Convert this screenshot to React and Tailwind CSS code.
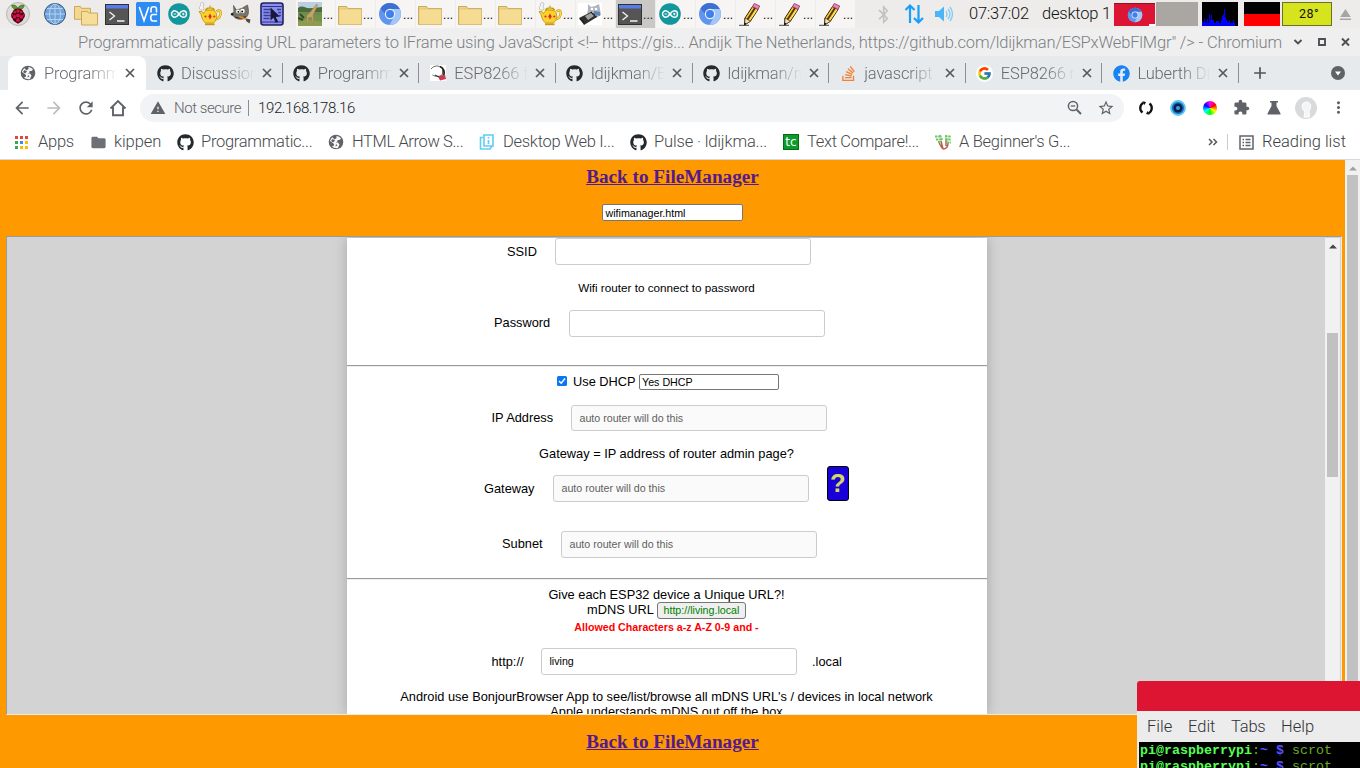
import React from "react";
import { FaGithub, FaFacebook, FaBluetoothB } from "react-icons/fa";
import { SiStackoverflow } from "react-icons/si";
import { FcGoogle } from "react-icons/fc";
import {
  MdArrowBack, MdArrowForward, MdRefresh, MdWarning, MdStarBorder,
  MdExtension, MdMoreVert, MdEject, MdFolder, MdAdd,
} from "react-icons/md";

function Raspberry() {
  return (
    <svg width="24" height="24" viewBox="0 0 24 24">
      <circle cx="12" cy="12" r="11.5" fill="#dcdbd9" stroke="#b9b8b6" />
      <path d="M11.5 7.5C8 7.5 6 6 5.7 3.2 9 2.6 11 4 11.8 6.5 12.6 4 15 2.6 18.2 3.2 18 6 16 7.500 12.500 7.500z" fill="#5f9e2a" stroke="#2d5a14" strokeWidth=".6" />
      <path d="M12 6.500C15 6.500 17 8 17.600 10.500 19.500 12 19.300 15 17.600 16.500 16.800 19.500 14 20.500 12 21.700 10 20.500 7.200 19.500 6.400 16.500 4.700 15 4.500 12 6.400 10.500 7 8 9 6.500 12 6.500z" fill="#4a0016" />
      <g fill="#c8143f">
        <circle cx="12" cy="9" r="1.800" /><circle cx="8.800" cy="10" r="1.500" /><circle cx="15.200" cy="10" r="1.500" />
        <circle cx="12" cy="13.500" r="2" /><circle cx="8.500" cy="14.800" r="1.900" /><circle cx="15.500" cy="14.800" r="1.900" />
        <circle cx="12" cy="18.200" r="1.900" /><circle cx="6.200" cy="13" r=".9" /><circle cx="17.800" cy="13" r=".9" />
      </g>
    </svg>
  );
}

function Globe() {
  return (
    <svg width="24" height="24" viewBox="0 0 24 24">
      <circle cx="12" cy="12" r="10.500" fill="#6ea3dc" stroke="#33527d" />
      <g fill="none" stroke="#b7d0ee" strokeWidth="1"><path d="M12 2v20M2 12h20M4 6.500h16M4 17.500h16" /><ellipse cx="12" cy="12" rx="5.500" ry="10" /></g>
    </svg>
  );
}

function Folder() {
  return (
    <svg width="24" height="24" viewBox="0 0 24 24">
      <path d="M.5 4.500h8l1.500 2h13.500v16H.5z" fill="#efd385" stroke="#c9a95f" />
      <path d="M1 7h22.500v15.500H1z" fill="#f6dc92" stroke="#d9bb72" strokeWidth=".7" />
    </svg>
  );
}

function Folders() {
  return (
    <svg width="26" height="24" viewBox="0 0 26 24">
      <path d="M1.500 4.500h6l1 1.800h9v11h-16z" fill="#f3d88e" stroke="#caa95e" />
      <path d="M8.500 9.500h6l1 1.500h9v12h-16z" fill="#f7de98" stroke="#caa95e" />
    </svg>
  );
}

function Terminal() {
  return (
    <svg width="24" height="24" viewBox="0 0 24 24">
      <rect x=".5" y="2.500" width="23" height="20" fill="#555" stroke="#303030" />
      <path d="M1 3h22v3.500H1z" fill="#587be6" />
      <path d="M4.500 10l5 4-5 4M12 19h7.500" fill="none" stroke="#f4f4f4" strokeWidth="1.300" />
    </svg>
  );
}

function Vnc() {
  return (
    <svg width="24" height="24" viewBox="0 0 24 24">
      <rect width="24" height="24" rx="1.500" fill="#2d8cf2" />
      <g fill="none" stroke="#fff" strokeWidth="1.600" strokeLinecap="round"><path d="M3.500 5.500l4.500 13 4.500-13" /><path d="M15 10V7c0-3 5.500-3 5.500 0v3" /><path d="M20.500 12.500H17c-3 0-3 6.500 0 6.500h3.500" /></g>
    </svg>
  );
}

function Arduino() {
  return (
    <svg width="24" height="24" viewBox="0 0 24 24">
      <circle cx="12" cy="12" r="10.800" fill="#12979c" />
      <path d="M12 12c-1.500-2.200-2.400-3.300-4.200-3.300a3.300 3.300 0 1 0 0 6.600c1.800 0 2.700-1.100 4.200-3.300s2.400-3.300 4.200-3.300a3.300 3.300 0 1 1 0 6.600c-1.800 0-2.700-1.100-4.200-3.300z" fill="none" stroke="#fff" strokeWidth="1.500" />
      <path d="M6.500 12h2.600M15 12h2.600M16.300 10.700v2.600" stroke="#fff" strokeWidth=".9" />
    </svg>
  );
}

function Teapot() {
  return (
    <svg width="24" height="24" viewBox="0 0 24 24">
      <path d="M2.500 8c-3-3 1-3.500 0-6.500 2-2 4.500-.5 3 1.500s1.500 3 0 5z" fill="#f6f6f6" stroke="#b4b4b4" strokeWidth=".8" />
      <path d="M18.500 9.500c5.500-4 6 5-.5 8" fill="none" stroke="#d29a08" strokeWidth="2.400" />
      <path d="M18.500 9.500c5.500-4 6 5-.5 8" fill="none" stroke="#ffe14a" strokeWidth="1.100" />
      <path d="M1 9.500h3l1.500 2c1-2.500 3-4 6-4s6 1 7 4.500c1 4-1 7-3 9H7.500C5 19 3.500 15.500 3 12.500z" fill="#f9d22c" stroke="#c08d0c" strokeWidth=".8" />
      <path d="M7.500 8c1-2.800 8-2.800 9 0zM12 3.500V6" fill="#fbe25a" stroke="#c99812" strokeWidth="1.100" />
      <path d="M12 11.500l1.800 3-1.800 3-1.800-3z" fill="#e22b2b" /><circle cx="7.500" cy="14.500" r="1.100" fill="#e22b2b" /><circle cx="16.300" cy="14.500" r="1.100" fill="#e22b2b" />
      <path d="M7 22.300h9.500" stroke="#c99812" strokeWidth="1.800" />
    </svg>
  );
}

function Gimp() {
  return (
    <svg width="24" height="24" viewBox="0 0 24 24">
      <path d="M4.500 3.500l3 4.500 5-1.500 6-3.500c1.500 6 1.500 10-1.500 12.500-4 3-10.500 2-12.500-1.500L2 12l3-2z" fill="#77746c" stroke="#56534c" strokeWidth=".7" />
      <circle cx="9" cy="9.500" r="1.900" fill="#fff" /><circle cx="13.500" cy="9" r="2.300" fill="#fff" /><circle cx="9.300" cy="9.800" r=".9" /><circle cx="13.200" cy="9.400" r="1" />
      <path d="M6 15c4 1.500 8 1 11-.5" stroke="#333" strokeWidth="1.300" fill="none" /><circle cx="3.200" cy="12.300" r="1.300" fill="#222" />
      <path d="M10 14.500l9 3.500" stroke="#e08a1e" strokeWidth="1.800" /><path d="M17.500 16.500l4 1-1 4-3.500-2.500z" fill="#4b4b4b" />
    </svg>
  );
}

function Screenshot() {
  return (
    <svg width="24" height="24" viewBox="0 0 24 24">
      <rect x="1" y="1" width="22" height="22" rx="2.500" fill="#8b8ff0" stroke="#20225e" strokeWidth="1.600" />
      <path d="M2 4.500h20M2 20h20" stroke="#30337c" strokeWidth="1" />
      <path d="M3.500 7.500h7M3.500 10.500h6M3.500 13.500h7M3.500 16.500h6M17 7.500h4M18 10.500h3M19 13.500h2" stroke="#3a3e94" strokeWidth="1.300" />
      <path d="M10.500 5.500l9.500 9-4.300.4 2.500 4.800-2.600 1-2.100-4.900-3 2.700z" fill="#17183d" />
    </svg>
  );
}

function Giraffe() {
  return (
    <svg width="24" height="24" viewBox="0 0 24 24">
      <path d="M0 0h24v24H0z" fill="#74924a" /><path d="M0 0h24v6H0z" fill="#b9cfe2" />
      <path d="M0 6c4-3 6-1 9 0s6 0 15-1v6H0z" fill="#4b6b38" /><path d="M0 10h24v3H0z" fill="#6f8c50" /><path d="M0 20l9-3 15 3v4H0z" fill="#8d9c50" />
      <path d="M18.500 2l1.500 1-5 10 .7 8h-1l-1.200-6-3 .5-1 6h-1l.5-8 2.500-2.500z" fill="#c9a068" stroke="#99754a" strokeWidth=".3" />
      <path d="M2 12l4 4M0 16l5 2" stroke="#30492a" strokeWidth="2" />
    </svg>
  );
}

function Chromium({ size = 24 }) {
  return (
    <svg width={size} height={size} viewBox="0 0 24 24">
      <circle cx="12" cy="12" r="11" fill="#5f95ec" />
      <path d="M12 1a11 11 0 0 1 9.800 6A11 11 0 0 1 11.500 23l5-9z" fill="#a3c5f8" />
      <path d="M12 1a11 11 0 0 1 9.800 6H12L7 12 2.500 6.500A11 11 0 0 1 12 1z" fill="#3d70d2" />
      <circle cx="12" cy="12" r="5.200" fill="#e8f0fd" /><circle cx="12" cy="12" r="4" fill="#3f80ea" />
    </svg>
  );
}

function Board() {
  return (
    <svg width="24" height="24" viewBox="0 0 24 24">
      <path d="M0 1h24v22H0z" fill="#fff" />
      <path d="M10 2l3 3 4-1 4-2 1 5 1 6-5 3-9-3 1-6z" fill="#aeb4bd" /><path d="M16 9l6 1v4l-6-2z" fill="#5b83b8" />
      <circle cx="14" cy="7" r="1.300" fill="#fff" /><circle cx="18" cy="7" r="1.300" fill="#fff" />
      <path d="M1 16l12-6 6 5-13 8z" fill="#30302f" /><path d="M7 14l6-3 3 3-6 4z" fill="#a5a39d" /><path d="M2 17l5 4M13 10l6 5" stroke="#111" strokeWidth="1.400" strokeDasharray="1 1" />
    </svg>
  );
}

function Pencil() {
  return (
    <svg width="24" height="24" viewBox="-2 0 24 24">
      <path d="M5 16L12.500 4.500l5.500 3L10.500 19 4.500 23z" fill="#fbc531" stroke="#33270a" />
      <path d="M7.500 17.500L15 6" stroke="#46370c" strokeWidth="1.800" /><path d="M9.500 18.500L17 7.500" stroke="#ffdf62" strokeWidth="1.200" />
      <path d="M12.500 4.500L14.200 1.500l5.500 2.500-1.700 3.500z" fill="#ee80bb" stroke="#7d3f60" strokeWidth=".8" />
      <path d="M5 16l5.500 3.200-6 3.800z" fill="#f3dcb4" stroke="#33270a" strokeWidth=".7" /><path d="M-1 23.300h10" stroke="#444" strokeWidth="1" /><path d="M4 23.200l.5-3 2 1.500z" fill="#111" />
    </svg>
  );
}

function World() {
  return (
    <svg width="16" height="16" viewBox="0 0 16 16" className="shrink-0">
      <circle cx="8" cy="8" r="7.300" fill="#5f6368" />
      <path d="M8.500 2C10 2 12 3 13 4.500L11.500 6H9.500V7.500L7.500 8.500H10L11.500 10.500 10 14C8 14.500 5.500 14 4 12.500L6 11.500V10L2 7C2.300 5.500 3.300 4 4.500 3.200L6.500 5.500 8.500 4z" fill="#fff" fillOpacity=".95" />
      <path d="M4.500 5L7 6.500 5 8.500 3 7zM8 10L9.500 11.500 7.500 12.500z" fill="#5f6368" />
    </svg>
  );
}

const launchers = [Raspberry, Globe, Folders, Terminal, Vnc, Arduino, Teapot, Gimp, Screenshot];
const tasks = [Giraffe, Folder, Chromium, Folder, Folder, Folder, Teapot, Board, Terminal, Arduino, Chromium, Pencil, Pencil, Pencil];

function Taskbar() {
  return (
    <div className="flex h-[28px] shrink-0 items-center bg-[#edecea] text-[16.500px] text-[#111]">
      <div className="flex h-full items-center">
        {launchers.map((Icon, i) => <div key={i} className={(i === 0 ? "w-[36px]" : i === 1 ? "w-[34px] pl-[3px]" : "w-[31px]") + " flex justify-center shrink-0"}><Icon /></div>)}
      </div>
      <div className="ml-[9px] flex h-full w-[560px] shrink-0">
        {tasks.map((Icon, i) => (
          <div key={i} className={(i === 8 ? "bg-[#cac8c5]" : "bg-[#f6f5f4]") + " mr-px flex h-full w-[39px] shrink-0 items-center pl-[2px]"}>
            <span className="shrink-0"><Icon /></span><span className="ml-px text-[13px] leading-[28px] pt-[2px] font-normal text-[#222]">...</span>
          </div>
        ))}
      </div>
      <div className="flex h-full w-[104px] items-center pl-[18px]">
        <FaBluetoothB className="text-[#c2c1bf]" size={19} />
        <svg className="ml-[11px]" width="20" height="22" viewBox="0 0 20 22"><path d="M6 20V3M1.500 7L6 2.500 10.500 7M14.500 2v17M10 15l4.500 4.500L19 15" fill="none" stroke="#1b9dfb" strokeWidth="2.200" /></svg>
        <svg className="ml-[10px]" width="20" height="18" viewBox="0 0 20 18"><path d="M1 6h4l5-4.500v15L5 12H1z" fill="#4bb5f7" /><path d="M12 6q2 3 0 6M14 4q4 5 0 10M16 2q5 7 0 14" fill="none" stroke="#7ecbf8" strokeWidth="1.300" /></svg>
      </div>
      <span className="ml-[9px] w-[73px] shrink-0 whitespace-nowrap pt-px tracking-[-0.250px]">07:37:02</span>
      <span className="w-[72px] shrink-0 whitespace-nowrap pt-px tracking-[-0.220px]">desktop 1</span>
      <div className="relative flex h-[23px] w-[41px] shrink-0 items-center justify-center border-t border-[#8c1524] bg-[#dd1534]"><Chromium size={16} /><i className="absolute right-0 bottom-0 h-[2px] w-[6px] bg-white" /></div>
      <div className="ml-px h-[24px] w-[42px] shrink-0 bg-[#aaa6a2]" />
      <svg className="ml-[4px] shrink-0" width="36" height="24"><path d="M0 0h36v24H0z" fill="#000" /><path d="M0 24v-5h1v2h1v-4h1v3h1v1h1v-4h1v4h1V12h1v6h1v-5h1v5h2v3h2v-2h3v2h2v-3h1v-4h1v-2h1V7h1v8h1v3h1v2h2v-2h1v3h3v-3h1v3h1v3z" fill="#0000ff" /></svg>
      <div className="ml-[6px] h-[24px] w-[36px] shrink-0 border-t-[12px] border-black bg-[#f00]" />
      <div className="ml-[2px] flex h-[24px] w-[50px] shrink-0 items-center justify-center border border-[#6b6f2c] bg-[#d5e41c] pt-px pl-[4px] text-[12.500px] font-normal tracking-[0.500px]">28°</div>
      <MdEject className="ml-[4px] shrink-0 text-[#a5a5a5]" size={19} />
    </div>
  );
}

function TitleBar() {
  return (
    <div className="flex h-[28px] shrink-0 items-center bg-[#efefef] pl-[78px] text-[#7c7f85]">
      <span className="w-[1215px] shrink-0 whitespace-nowrap pt-[2px] text-[16.500px] tracking-[-0.171px]">Programmatically passing URL parameters to IFrame using JavaScript &lt;!-- https://gis... Andijk The Netherlands, https://github.com/ldijkman/ESPxWebFlMgr" /&gt; - Chromium</span>
      <svg width="64" height="14" viewBox="0 0 64 14" fill="none" stroke="#4d4f52" strokeWidth="1.900"><path d="M1.500 5L5 8.500 8.500 5" /><path d="M26 4h6v6h-6z" /><path d="M49 3.500l7 7M56 3.500l-7 7" /></svg>
    </div>
  );
}

function Dog() {
  return <svg width="17" height="17" viewBox="0 0 17 17"><path d="M0 0h16v16H0z" fill="#fff" /><path d="M1 4C4 0 10 0 12.500 4v5c-1 3-7 3-10 1" fill="#fff" stroke="#555" strokeWidth=".9" /><path d="M10 1.500c4 1.500 5 6 3.500 9.500" stroke="#222" fill="none" strokeWidth="1.800" /><path d="M8 11.500l7-2 1 4.500-6 1.500z" fill="#c83b50" /><path d="M5 10l4 2" stroke="#222" /></svg>;
}
const gh = <FaGithub size={17} color="#24292e" />;
const tabs = [
  ["Programm", <World />], ["Discussion", gh], ["Programm", gh], ["ESP8266 f", <Dog />],
  ["ldijkman/ES", gh], ["ldijkman/m", gh], ["javascript", <SiStackoverflow size={15} color="#ef8236" />],
  ["ESP8266 m", <span className="flex h-[17px] w-[17px] items-center justify-center rounded-full bg-white"><FcGoogle size={15} /></span>],
  ["Luberth Dij", <FaFacebook size={17} color="#1684f2" />],
];

function Tabs() {
  return (
    <div className="flex h-[34px] shrink-0 items-center bg-[#e7eaed] pl-[8px]">
      {tabs.map(([name, icon], i) => (
        <div key={i} className={(i === 0 ? "rounded-t-[8px] bg-white w-[138px]" : "w-[136.650px]") + " flex h-full shrink-0 items-center"}>
          <span className={(i === 0 ? "ml-[11px]" : "ml-[10px]") + " flex w-[18px] shrink-0 justify-center"}>{icon}</span>
          <span className="ml-[7px] w-[74px] shrink-0 overflow-hidden whitespace-nowrap pt-[2px] text-[16.500px] tracking-[-0.150px] text-[#66696e] [mask-image:linear-gradient(to_right,#000_60%,transparent)]">{name}</span>
          <svg className="ml-[7px] shrink-0" width="10" height="10" viewBox="0 0 10 10"><path d="M1 1l8 8M9 1L1 9" stroke="#55585c" strokeWidth="1.700" /></svg>
          {i > 0 && <span className="ml-auto h-[20px] w-px shrink-0 bg-[#8b8e92]" />}
        </div>
      ))}
      <MdAdd className="ml-[11px] text-[#505357]" size={20} />
      <svg className="ml-[60px]" width="16" height="16" viewBox="0 0 16 16"><circle cx="8" cy="8" r="7" fill="#5f6368" /><path d="M5 6.500h6L8 10.500z" fill="#fff" /></svg>
    </div>
  );
}

function Toolbar() {
  return (
    <div className="flex h-[35px] shrink-0 items-center bg-white text-[#5f6368]">
      <MdArrowBack className="ml-[12px]" size={20} /><MdArrowForward className="ml-[12px] text-[#bcbdbf]" size={20} /><MdRefresh className="ml-[12px]" size={20} />
      <svg className="ml-[13px]" width="18" height="18" viewBox="0 0 18 18"><path d="M1.500 9.500L9 2l7.500 7.500M4 8v8.200h10V8" fill="none" stroke="#5f6368" strokeWidth="1.900" /></svg>
      <div className="ml-[13px] flex h-[28px] w-[984px] shrink-0 items-center rounded-full bg-[#f1f3f4]">
        <MdWarning className="ml-[10px]" size={16} />
        <span className="ml-[8px] w-[74px] whitespace-nowrap pt-px text-[15px] tracking-[-0.450px]">Not secure</span>
        <span className="h-[16px] w-px bg-[#8b8e92]" />
        <span className="ml-[9px] pt-px text-[15px] tracking-[-0.380px] text-[#202124]">192.168.178.16</span>
        <svg className="ml-auto" width="15" height="15" viewBox="0 0 15 15" fill="none" stroke="#5f6368"><circle cx="6" cy="6" r="4.600" strokeWidth="1.500" /><path d="M9.500 9.500l4.500 4.500" strokeWidth="1.900" /><path d="M3.800 6h4.400" strokeWidth="1.300" /></svg>
        <MdStarBorder className="ml-[15px] mr-[9px]" size={18} />
      </div>
      <svg className="ml-[14px]" width="16" height="16" viewBox="0 0 16 16" fill="none" stroke="#111" strokeWidth="2.300"><path d="M4.500 12.500A5.700 5.700 0 0 1 5.500 2.800" /><path d="M11.500 3.500A5.700 5.700 0 0 1 10.500 13.200" /><path d="M4.500 1.200l3.500.8-1.500 3zM11.500 14.800L8 14l1.500-3z" fill="#111" stroke="none" /></svg>
      <svg className="ml-[16px]" width="16" height="16" viewBox="0 0 16 16"><circle cx="8" cy="8" r="7" fill="#1a6fc0" stroke="#5cc6f2" strokeWidth="1.800" /><circle cx="8" cy="8" r="4.500" fill="#0c2150" /><circle cx="8" cy="8" r="2" fill="#39a2dc" /></svg>
      <div className="ml-[17px] h-[14px] w-[14px] rounded-full bg-[conic-gradient(#f0f,#f00,#ff0,#0f0,#0ff,#00f,#f0f)]" />
      <MdExtension className="ml-[16px]" size={17} />
      <svg className="ml-[17px]" width="14" height="15" viewBox="0 0 14 15"><path d="M3 1h8v1.500H9.500V6l4 7.500v1H.5v-1l4-7.500V2.500H3z" fill="#5f6368" /></svg>
      <svg className="ml-[14px]" width="22" height="22" viewBox="0 0 22 22"><circle cx="11" cy="11" r="11" fill="#dadada" /><path d="M9 20l1-5C5 10 7 5 11.500 5s5.500 5 2.500 9l.5 6z" fill="#f3f6f9" stroke="#fff" /></svg>
      <MdMoreVert className="ml-[12px]" size={19} />
    </div>
  );
}

function Apps() {
  const c = ["#ea4335", "#ea4335", "#ea4335", "#34a853", "#4285f4", "#fbbc04", "#34a853", "#fbbc04", "#fbbc04"];
  return <div className="grid grid-cols-3 gap-[2px]">{c.map((f, i) => <i key={i} className="h-[3px] w-[3px]" style={{ background: f }} />)}</div>;
}

function Bookmarks() {
  const item = "flex items-center shrink-0 whitespace-nowrap tracking-[-0.280px]";
  return (
    <div className="flex h-[35px] shrink-0 items-center border-b border-[#d5d7da] bg-white text-[16.500px] text-[#45484c]">
      <div className={item + " ml-[15px] w-[75px]"}><Apps /><span className="ml-[10px]">Apps</span></div>
      <div className={item + " w-[87px] !tracking-[-0.100px]"}><MdFolder size={17} color="#6d7074" /><span className="ml-[7px]">kippen</span></div>
      <div className={item + " w-[151px]"}><FaGithub size={17} color="#24292e" /><span className="ml-[7px]">Programmatic...</span></div>
      <div className={item + " w-[151px] !tracking-[-0.380px]"}><World /><span className="ml-[8px]">HTML Arrow S...</span></div>
      <div className={item + " w-[151px]"}>
        <svg width="16" height="16" viewBox="0 0 16 16" fill="none" stroke="#61cdf0" strokeWidth="1.600"><path d="M4 1h10v11H5V1M4 3.500H1.500V15H11l2-3" /><path d="M9.500 3v1.500M9.500 6v4" /></svg>
        <span className="ml-[8px]">Desktop Web I...</span>
      </div>
      <div className={item + " w-[153px] !tracking-[-0.150px]"}><FaGithub size={17} color="#24292e" /><span className="ml-[7px]">Pulse · ldijkma...</span></div>
      <div className={item + " w-[152px] !tracking-[-0.320px]"}><span className="flex h-[16px] w-[16px] items-center justify-center border border-[#056a1b] bg-[#0c9a2c] font-['DejaVu_Sans'] text-[12px] font-normal leading-none tracking-normal text-white">tc</span><span className="ml-[8px]">Text Compare!...</span></div>
      <div className={item}>
        <svg width="17" height="16" viewBox="0 0 17 16" fill="none"><path d="M8 15c3 0 5-2 5-6M8 15L6 7M4 7c0 4 2 5 4 8M11 12V6" stroke="#b4654f" strokeWidth="1.500" /><path d="M0 2.500h6M1 5.500h6M10 2.500h6M10 5.500h6M3 8h3M12 8.500h4M5 1l2 5M11 1l1 6" stroke="#74c46c" strokeWidth="2" strokeDasharray="2.500 .7" /></svg>
        <span className="ml-[7px]">A Beginner's G...</span>
      </div>
      <svg className="ml-auto" width="10" height="8" viewBox="0 0 10 8" fill="none" stroke="#55585c" strokeWidth="1.500"><path d="M1 1l3 3-3 3M5.500 1l3 3-3 3" /></svg>
      <span className="ml-[9px] h-[16px] w-px bg-[#c9cbce]" />
      <svg className="ml-[11px]" width="15" height="15" viewBox="0 0 15 15" fill="none" stroke="#5f6368" strokeWidth="1.500"><path d="M1 1h13v13H1zM3.500 4.500H5M3.500 7.500H5M3.500 10.500H5M6.500 4.500h5M6.500 7.500h5M6.500 10.500h5" /></svg>
      <span className="ml-[8px] mr-[14px] shrink-0 whitespace-nowrap text-[#3c4043]">Reading list</span>
    </div>
  );
}

const field = "h-[27px] w-[256px] shrink-0 rounded-[3px] border border-[#ccc] pl-[7.500px] text-[10.670px] leading-[25px]";
function Field({ text = "", disabled }) {
  return <div className={field + (disabled ? " bg-[#fafafa] text-[#5f5f5f]" : " bg-white text-black")}>{text}</div>;
}
const row = "flex shrink-0 items-center text-[12.800px] text-black whitespace-nowrap";

function WifiForm() {
  return (
    <div className="flex h-[476px] w-[640px] shrink-0 flex-col overflow-hidden bg-white font-['Liberation_Sans',sans-serif] font-normal">
      <div className={row + " h-[27px] pl-[160px]"}><span className="w-[48px]">SSID</span><Field /></div>
      <div className={row + " mt-[15px] h-[15px] justify-center pr-px !text-[11.700px]"}>Wifi router to connect to password</div>
      <div className={row + " mt-[15px] h-[27px] pl-[147px]"}><span className="-mt-px w-[75px]">Password</span><Field /></div>
      <div className="mt-[28px] h-[2px] shrink-0 border-t border-[#9a9a9a] bg-[#eee]" />
      <div className={row + " mt-[7px] h-[16px] pl-[210px]"}>
        <svg className="-mt-[2px]" width="10" height="10" viewBox="0 0 10 10"><rect width="10" height="10" rx="1.500" fill="#0a75f5" /><path d="M2 5l2.200 2.200L8 2.500" fill="none" stroke="#fff" strokeWidth="1.500" /></svg>
        <span className="ml-[6px] w-[66px]">Use DHCP</span>
        <div className="h-[16px] w-[140px] rounded-[2px] border border-[#767676] pl-[2px] text-[10.700px] leading-[14px]">Yes DHCP</div>
      </div>
      <div className={row + " mt-[15px] h-[26px] pl-[144.500px]"}><span className="w-[79.500px]">IP Address</span><div className={field + " !h-[26px] bg-[#fafafa] text-[#5f5f5f]"}>auto router will do this</div></div>
      <div className={row + " mt-[15px] h-[15px] justify-center pr-px"}>Gateway = IP address of router admin page?</div>
      <div className={row + " mt-[5px] h-[35px] items-start pl-[137px]"}>
        <span className="w-[69px] pt-[13px] leading-[20px]">Gateway</span><div className="pt-[9px]"><Field text="auto router will do this" disabled /></div>
        <div className="ml-[18px] h-[35px] w-[22px] rounded-[3px] border border-black bg-[#1a00d8] pl-[2px] text-[25.600px] font-bold leading-[33px] text-[#d5d665]">?</div>
      </div>
      <div className={row + " mt-[30px] h-[27px] pl-[155px]"}><span className="-mt-px w-[59px]">Subnet</span><Field text="auto router will do this" disabled /></div>
      <div className="mt-[20px] h-[2px] shrink-0 border-t border-[#9a9a9a] bg-[#eee]" />
      <div className={row + " mt-[7px] h-[15px] justify-center pr-px"}>Give each ESP32 device a Unique URL?!</div>
      <div className={row + " h-[17px] justify-center pr-px"}><span className="-mt-[2px]">mDNS URL</span><div className="ml-[3px] h-[17px] w-[89px] rounded-[3px] border border-[#767676] bg-[#efefef] text-center text-[10.670px] leading-[15px] text-[#008000]">http://living.local</div></div>
      <div className={row + " h-[15px] justify-center pr-px !text-[10.670px] font-bold !text-[#f00]"}>Allowed Characters a-z A-Z 0-9 and -</div>
      <div className={row + " mt-[14px] h-[27px] pl-[144.500px]"}><span className="w-[49.500px]">http://</span><Field text="living" /><span className="ml-[15px]">.local</span></div>
      <div className={row + " mt-[14px] h-[15px] justify-center pr-px"}>Android use BonjourBrowser App to see/list/browse all mDNS URL's / devices in local network</div>
      <div className={row + " h-[15px] justify-center pr-px"}>Apple understands mDNS out off the box</div>
    </div>
  );
}

function Arrow({ color }) {
  return <svg width="8" height="5" viewBox="0 0 8 5" className="shrink-0"><path d="M0 4.500L4 .5l4 4z" fill={color} /></svg>;
}

const backLink = "flex h-[22px] shrink-0 items-center justify-center pr-[3px] font-['Liberation_Serif',serif] text-[19.200px] font-bold text-[#551a8b] underline";

function Page() {
  return (
    <div className="flex h-[608px] shrink-0 bg-[#ff9900]">
      <div className="flex w-[1345px] flex-col pl-[6px] pr-[3px]">
        <a className={backLink + " mt-[6px]"}>Back to FileManager</a>
        <div className="ml-[596px] mt-[16px] h-[17px] w-[141px] shrink-0 rounded-[2px] border border-[#767676] bg-white pl-[2.500px] font-['Liberation_Sans'] text-[10.670px] font-normal leading-[16px] text-black">wifimanager.html</div>
        <div className="mt-[15px] flex h-[479px] shrink-0 overflow-hidden border border-t-[#9a9a9a] border-l-[#9a9a9a] border-r-[#eee] border-b-[#eee] bg-[#d3d3d3] pt-px pl-px pr-px">
          <div className="flex w-[1317px] shrink-0 pl-[339px]"><div className="shadow-[0_0_12px_rgba(0,0,0,0.22)]"><WifiForm /></div></div>
          <div className="flex w-[15px] shrink-0 flex-col items-center bg-[#f1f1f1] pt-[6px]"><Arrow color="#444" /><div className="mt-[84px] h-[144px] w-[11px] bg-[#c1c1c1]" /></div>
        </div>
        <a className={backLink + " mt-[16px]"}>Back to FileManager</a>
      </div>
      <div className="flex w-[15px] flex-col items-center bg-[#f1f1f1] pt-[6px]"><Arrow color="#a0a0a0" /><div className="mt-[4px] w-[11px] grow bg-[#c1c1c1]" /></div>
    </div>
  );
}

function TerminalWindow() {
  const line = (
    <div className="h-[16px] whitespace-pre pl-[1px] font-['Liberation_Mono',monospace] text-[13.330px] font-normal leading-[18px] text-[#6aab2a]">
      <b className="text-[#54ff54]">pi@raspberrypi</b>:<b className="text-[#5454ff]">~ $</b> scrot
    </div>
  );
  return (
    <div className="absolute top-[681px] left-[1137px] flex h-[87px] w-[223px] flex-col overflow-hidden rounded-tl-[3px] bg-[#ececec]">
      <div className="h-[30px] shrink-0 bg-[#dd1532]" />
      <div className="flex h-[31px] shrink-0 items-center pl-[10px] pt-px text-[16.500px] text-[#303336]"><span className="w-[41px]">File</span><span className="w-[43px]">Edit</span><span className="w-[50px] tracking-[-0.200px]">Tabs</span><span>Help</span></div>
      <div className="ml-[2px] grow bg-black">{line}{line}</div>
    </div>
  );
}

export default function App() {
  return (
    <div className="relative flex h-[768px] w-[1360px] flex-col overflow-hidden bg-white font-['Roboto',sans-serif] font-light">
      <Taskbar /><TitleBar /><Tabs /><Toolbar /><Bookmarks /><Page /><TerminalWindow />
    </div>
  );
}
